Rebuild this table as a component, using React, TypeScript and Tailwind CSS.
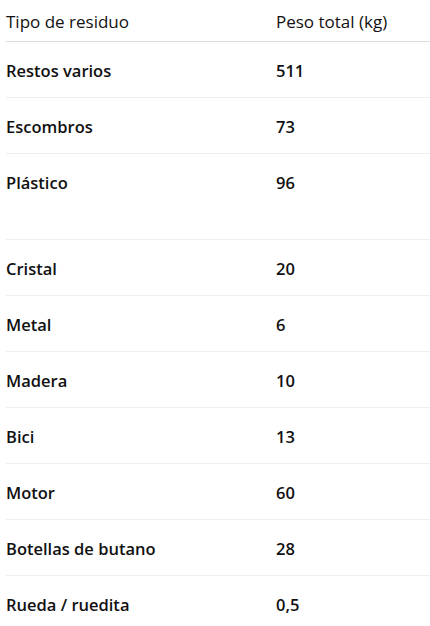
const rows: { tipo: string; peso: string; tall?: boolean }[] = [
  { tipo: "Restos varios", peso: "511" },
  { tipo: "Escombros", peso: "73" },
  { tipo: "Plástico", peso: "96", tall: true },
  { tipo: "Cristal", peso: "20" },
  { tipo: "Metal", peso: "6" },
  { tipo: "Madera", peso: "10" },
  { tipo: "Bici", peso: "13" },
  { tipo: "Motor", peso: "60" },
  { tipo: "Botellas de butano", peso: "28" },
  { tipo: "Rueda / ruedita", peso: "0,5" },
];

export default function App() {
  return (
    <div className="bg-white pl-[6px] text-[#111] font-['Open_Sans',sans-serif] text-[16.5px]">
      <table className="w-full border-collapse">
        <thead>
          <tr className="border-b border-[#dcdcdc]">
            <th className="h-[41px] w-[270px] text-left text-[17px] font-normal align-middle pt-[3px]">Tipo de residuo</th>
            <th className="h-[41px] text-left text-[17px] font-normal align-middle pt-[3px]">Peso total (kg)</th>
          </tr>
        </thead>
        <tbody>
          {rows.map((r, i) => (
            <tr key={i} className={i < rows.length - 1 ? "border-b border-[#efefef]" : ""}>
              <td className={`font-semibold align-top pt-[17px] ${r.tall ? "h-[86px]" : "h-[56px]"}`}>{r.tipo}</td>
              <td className={`font-semibold align-top pt-[17px] ${r.tall ? "h-[86px]" : "h-[56px]"}`}>{r.peso}</td>
            </tr>
          ))}
        </tbody>
      </table>
    </div>
  );
}
